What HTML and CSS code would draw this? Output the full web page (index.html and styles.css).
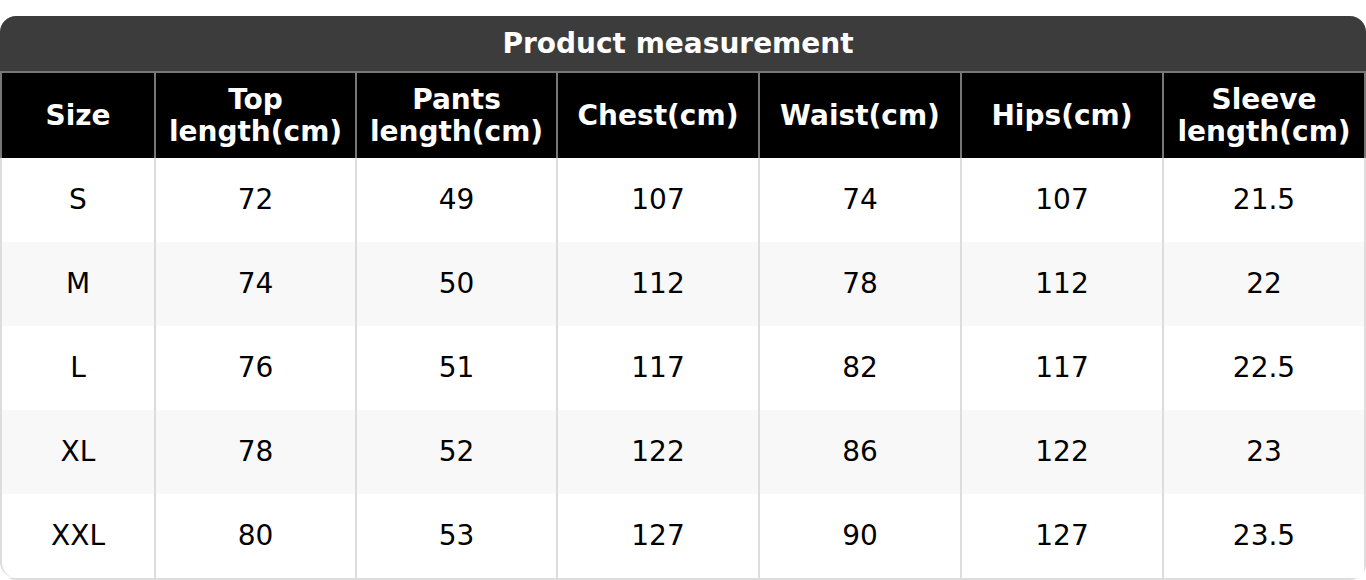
FILE: index.html
```html
<!DOCTYPE html>
<html>
<head>
<meta charset="utf-8">
<link rel="stylesheet" href="styles.css">
</head>
<body>
<div class="sheet">
  <div class="title">Product measurement</div>
  <div class="grid head">
    <div class="cell">Size</div>
    <div class="cell">Top length(cm)</div>
    <div class="cell">Pants length(cm)</div>
    <div class="cell">Chest(cm)</div>
    <div class="cell">Waist(cm)</div>
    <div class="cell">Hips(cm)</div>
    <div class="cell">Sleeve length(cm)</div>
  </div>
  <div class="grid row">
    <div class="cell">S</div><div class="cell">72</div><div class="cell">49</div><div class="cell">107</div><div class="cell">74</div><div class="cell">107</div><div class="cell">21.5</div>
  </div>
  <div class="grid row alt">
    <div class="cell">M</div><div class="cell">74</div><div class="cell">50</div><div class="cell">112</div><div class="cell">78</div><div class="cell">112</div><div class="cell">22</div>
  </div>
  <div class="grid row">
    <div class="cell">L</div><div class="cell">76</div><div class="cell">51</div><div class="cell">117</div><div class="cell">82</div><div class="cell">117</div><div class="cell">22.5</div>
  </div>
  <div class="grid row alt">
    <div class="cell">XL</div><div class="cell">78</div><div class="cell">52</div><div class="cell">122</div><div class="cell">86</div><div class="cell">122</div><div class="cell">23</div>
  </div>
  <div class="grid row last">
    <div class="cell">XXL</div><div class="cell">80</div><div class="cell">53</div><div class="cell">127</div><div class="cell">90</div><div class="cell">127</div><div class="cell">23.5</div>
  </div>
</div>
</body>
</html>
```
FILE: styles.css
```css
* { box-sizing: border-box; }
html, body { margin: 0; padding: 0; background: #ffffff; }
body { padding-top: 16px; font-family: "DejaVu Sans", "Liberation Sans", sans-serif; }
.sheet {
  width: 1366px;
  border-radius: 16px;
  overflow: hidden;
  background: #ffffff;
}
.title {
  height: 57px;
  line-height: 55px;
  padding-right: 10px;
  background: #3c3c3c;
  border-bottom: 2px solid #777777;
  color: #ffffff;
  font-weight: bold;
  font-size: 28px;
  text-align: center;
}
.grid {
  display: grid;
  grid-template-columns: 154px 201px 201px 202px 202px 202px 1fr;
}
.cell {
  display: flex;
  align-items: center;
  justify-content: center;
  text-align: center;
  font-size: 28px;
  line-height: 32px;
  padding: 0 8px;
}
.head { height: 85px; background: #000000; }
.head .cell {
  color: #ffffff;
  font-weight: bold;
  border-left: 2px solid #777777;
}
.head .cell:last-child { border-right: 2px solid #777777; }
.row { height: 84px; background: #ffffff; }
.row.alt { background: #f8f8f8; }
.row .cell {
  color: #000000;
  border-left: 2px solid #dddddd;
}
.row .cell:last-child { border-right: 2px solid #dddddd; }
.row.last { height: 86px; border-bottom: 2px solid #dddddd; }
.row.last .cell:first-child { border-bottom-left-radius: 16px; }
```
